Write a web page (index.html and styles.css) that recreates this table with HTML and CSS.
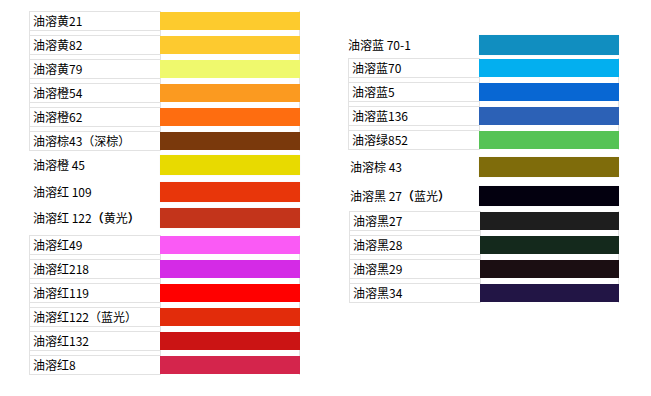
FILE: index.html
```html
<!DOCTYPE html>
<html lang="zh-CN">
<head>
<meta charset="utf-8">
<title>油溶染料色卡</title>
<link rel="stylesheet" href="styles.css">
</head>
<body>
<div class="page">
  <div class="col col-left">
    <div class="tbl">
      <div class="row"><div class="name">油溶黄21</div><div class="cell"><div class="sw" style="background:#FDCB2D"></div></div></div>
      <div class="row"><div class="name">油溶黄82</div><div class="cell"><div class="sw" style="background:#FDCA2F"></div></div></div>
      <div class="row"><div class="name">油溶黄79</div><div class="cell"><div class="sw" style="background:#EFF96D"></div></div></div>
      <div class="row"><div class="name">油溶橙54</div><div class="cell"><div class="sw" style="background:#FB9A20"></div></div></div>
      <div class="row"><div class="name">油溶橙62</div><div class="cell"><div class="sw" style="background:#FE6D10"></div></div></div>
      <div class="row"><div class="name">油溶棕43（深棕）</div><div class="cell"><div class="sw" style="background:#7A390C"></div></div></div>
    </div>
    <div class="loose l-45"><div class="lname">油溶橙 45</div><div class="lsw" style="background:#E8DA00"></div></div>
    <div class="loose l-109"><div class="lname">油溶红 109</div><div class="lsw" style="background:#E8360A"></div></div>
    <div class="loose l-122"><div class="lname">油溶红 122<span class="paren">（</span>黄光<span class="paren">）</span></div><div class="lsw" style="background:#C3341B"></div></div>
    <div class="tbl tbl-b">
      <div class="row"><div class="name">油溶红49</div><div class="cell"><div class="sw" style="background:#FA5AF5"></div></div></div>
      <div class="row"><div class="name">油溶红218</div><div class="cell"><div class="sw" style="background:#D42BE6"></div></div></div>
      <div class="row"><div class="name">油溶红119</div><div class="cell"><div class="sw" style="background:#FF0000"></div></div></div>
      <div class="row"><div class="name">油溶红122（蓝光）</div><div class="cell"><div class="sw" style="background:#E22C0B"></div></div></div>
      <div class="row"><div class="name">油溶红132</div><div class="cell"><div class="sw" style="background:#CB1414"></div></div></div>
      <div class="row"><div class="name">油溶红8</div><div class="cell"><div class="sw" style="background:#D4254C"></div></div></div>
    </div>
  </div>

  <div class="col col-right">
    <div class="loose r-701"><div class="lname">油溶蓝 70-1</div><div class="lsw" style="background:#118EC0"></div></div>
    <div class="tbl tbl-c">
      <div class="row"><div class="name">油溶蓝70</div><div class="cell"><div class="sw" style="background:#03AFEF"></div></div></div>
      <div class="row"><div class="name">油溶蓝5</div><div class="cell"><div class="sw" style="background:#0867D3"></div></div></div>
      <div class="row"><div class="name">油溶蓝136</div><div class="cell"><div class="sw" style="background:#2C61B6"></div></div></div>
      <div class="row"><div class="name">油溶绿852</div><div class="cell"><div class="sw" style="background:#56C356"></div></div></div>
    </div>
    <div class="loose shift r-43"><div class="lname">油溶棕 43</div><div class="lsw" style="background:#7F6C0B"></div></div>
    <div class="loose shift r-27"><div class="lname">油溶黑 27<span class="paren">（</span>蓝光<span class="paren">）</span></div><div class="lsw" style="background:#03000F"></div></div>
    <div class="tbl tbl-d">
      <div class="row"><div class="name">油溶黑27</div><div class="cell"><div class="sw" style="background:#1E1E1E"></div></div></div>
      <div class="row"><div class="name">油溶黑28</div><div class="cell"><div class="sw" style="background:#14291C"></div></div></div>
      <div class="row"><div class="name">油溶黑29</div><div class="cell"><div class="sw" style="background:#1B0E12"></div></div></div>
      <div class="row"><div class="name">油溶黑34</div><div class="cell"><div class="sw" style="background:#221545"></div></div></div>
    </div>
  </div>
</div>
</body>
</html>
```

FILE: styles.css
```css
html, body {
  margin: 0;
  padding: 0;
  background: #ffffff;
}

body {
  font-family: "Noto Sans CJK SC", "Noto Sans", sans-serif;
  font-size: 12px;
  color: #000000;
}

.page {
  display: flex;
  align-items: flex-start;
}

.col {
  display: flex;
  flex-direction: column;
  width: 271px;
}

.col-left {
  margin-left: 29px;
  margin-top: 11px;
}

.col-right {
  margin-left: 48px;
  margin-top: 35px;
}

/* bordered table blocks */
.tbl {
  border-left: 1px solid #e2e2e2;
  display: flex;
  flex-direction: column;
}

.row {
  display: flex;
  height: 24px;
}

.row:last-child {
  height: 20px;
}

.name {
  width: 127px;
  padding-left: 3px;
  height: 18px;
  line-height: 18px;
  border-top: 1px solid #e2e2e2;
  border-bottom: 1px solid #e2e2e2;
  white-space: nowrap;
}

.cell {
  width: 138px;
  border-left: 1px solid #e2e2e2;
  border-right: 1px solid #e2e2e2;
}

.sw {
  height: 18px;
  margin: 1px -1px 0 -1px;
}

/* borderless rows */
.loose {
  display: flex;
  align-items: center;
  height: 20px;
}

.lname {
  width: 127px;
  padding-left: 4px;
  white-space: nowrap;
  line-height: 18px;
}

.lsw {
  width: 140px;
  height: 20px;
  box-shadow: 0 0 1px rgba(0, 0, 0, 0.08);
}

.paren {
  font-weight: bold;
}

.l-45 { margin-top: 4px; }
.l-109 { margin-top: 7px; }
.l-122 { margin-top: 6px; }
.tbl-b { margin-top: 7px; }

.r-701 .lname {
  width: 131px;
  padding-left: 0;
}

.tbl-c { margin-top: 3px; }

.shift {
  margin-left: 1px;
}

.shift .lname {
  width: 129px;
  padding-left: 1px;
}

.r-43 { margin-top: 7px; }
.r-27 { margin-top: 9px; }

.tbl-d {
  margin-top: 5px;
  margin-left: 1px;
}
```
